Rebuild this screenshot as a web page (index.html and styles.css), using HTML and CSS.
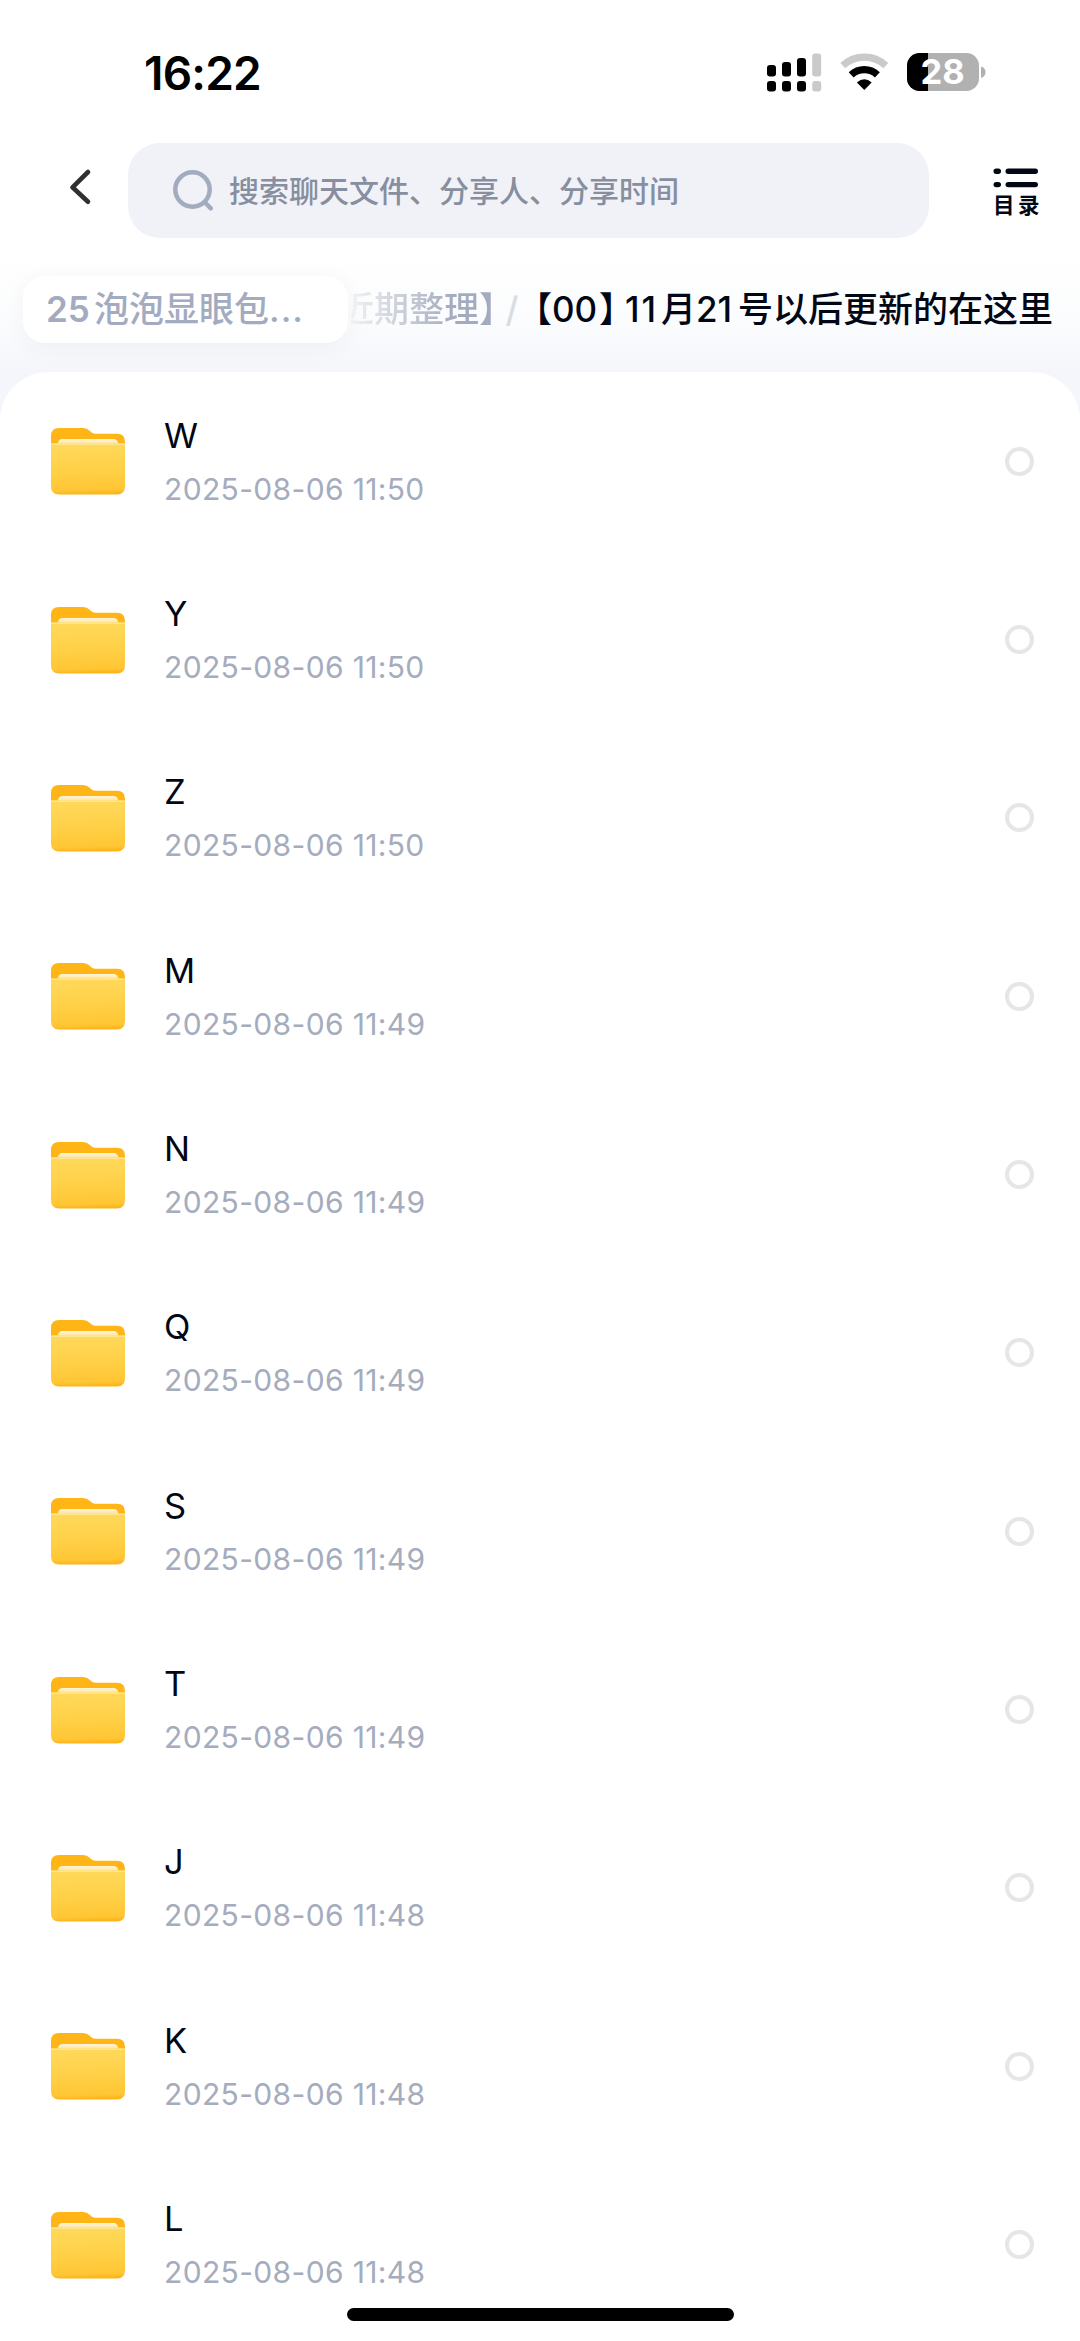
FILE: index.html
```html
<!DOCTYPE html>
<html lang="zh-CN">
<head>
<meta charset="utf-8">
<title>文件目录</title>
<link rel="stylesheet" href="styles.css">
</head>
<body>
<svg class="defs" width="0" height="0" aria-hidden="true">
  <defs>
    <linearGradient id="front" x1="0" y1="0" x2="0.04" y2="1">
      <stop offset="0" stop-color="#ffd95c"/><stop offset="0.5" stop-color="#ffd149"/><stop offset="0.93" stop-color="#ffc634"/><stop offset="1" stop-color="#fdb51c"/>
    </linearGradient>
    <linearGradient id="paper" x1="0" y1="0" x2="0" y2="1">
      <stop offset="0" stop-color="#fff6dd"/><stop offset="1" stop-color="#ffdf8c"/>
    </linearGradient>
    <symbol id="folder" viewBox="0 0 74 67">
      <path d="M0 18V8Q0 0 8 0H32Q36 0 39 3L41 4.700Q42.500 5.800 45 5.800H66Q74 5.800 74 14V18Z" fill="#ffb515"/>
      <path d="M6.500 17Q7 11 11 11H63Q67 11 67.500 17Z" fill="url(#paper)"/>
      <path d="M0 15.500H74V58Q74 66.500 66 66.500H8Q0 66.500 0 58Z" fill="url(#front)"/>
      <path d="M0 16.200H74" stroke="#ffe58d" stroke-width="1.400"/>
    </symbol>
  </defs>
</svg>
<header class="top">
  <div class="status">
    <div class="clock">16:22</div>
    <svg class="signals" width="220" height="40" viewBox="0 0 220 40">
      <g fill="#000"><rect x="1" y="12" width="9" height="11.500" rx="3"/><rect x="16" y="9" width="9" height="14.500" rx="3"/><rect x="31" y="5" width="9" height="18.500" rx="3"/><rect x="1" y="28" width="9" height="10.500" rx="3"/><rect x="16" y="28" width="9" height="10.500" rx="3"/><rect x="31" y="28" width="9" height="10.500" rx="3"/></g>
      <g fill="#cacaca"><rect x="46.200" y="0.500" width="9" height="23" rx="3"/><rect x="46.200" y="28" width="9" height="10.500" rx="3"/></g>
      <path d="M76.800 12.600A31.500 31.500 0 0 1 119.800 12.600" fill="none" stroke="#cacaca" stroke-width="7.200"/>
      <path d="M85.200 21.800A19.200 19.200 0 0 1 111.400 21.800" fill="none" stroke="#000" stroke-width="7.200"/>
      <path d="M98.300 37L90.900 29.600Q98.300 23 105.700 29.600Z" fill="#000"/>
      <clipPath id="cell"><rect x="141" y="0" width="72" height="38" rx="12.500"/></clipPath>
      <g clip-path="url(#cell)"><rect x="141" y="0" width="72" height="38" fill="#b1b1b1"/><rect x="141" y="0" width="21" height="38" fill="#000"/></g>
      <path d="M215 13.500Q219.500 14.500 219.500 19T215 25Z" fill="#b1b1b1"/>
      <text class="charge" x="176.500" y="31.300" text-anchor="middle">28</text>
    </svg>
  </div>
  <div class="searchbar">
    <svg class="back" width="24" height="40" viewBox="0 0 24 40"><path d="M19 5L3.500 20.300L19 34.800" fill="none" stroke="#303033" stroke-width="4.600" stroke-linecap="round" stroke-linejoin="round"/></svg>
    <div class="search">
      <svg width="44" height="44" viewBox="0 0 44 44" fill="none" stroke="#a3acbf" stroke-width="4.500" stroke-linecap="round"><circle cx="20.500" cy="20.500" r="17.200"/><path d="M33 33.500L38.800 39.300"/></svg>
      <span>搜索聊天文件、分享人、分享时间</span>
    </div>
    <div class="menu">
      <svg width="46" height="20" viewBox="0 0 46 20" stroke="#020716" stroke-width="5.400" stroke-linecap="round"><path d="M3.200 3.200H5.300M15.200 3.200H42.300M3.200 16.600H5.300M15.200 16.600H42.300"/></svg>
      <span>目录</span>
    </div>
  </div>
</header>
<nav class="crumbs">
  <div class="chip"><span class="num">25</span><span>泡泡显眼包</span><span class="dots">...</span></div>
  <div class="trail">
    <span class="past">近期整理】</span><span class="slash">/</span>
    <span class="open">【</span><span class="n00">00</span><span class="close">】</span><span class="n11">11</span><span>月</span><span class="n21">21</span><span>号以后更新的在这里</span>
  </div>
</nav>
<main class="list">
  <div class="row"><svg class="folder"><use href="#folder"/></svg><div class="info"><div class="name">W</div><div class="date">2025-08-06 11:50</div></div><i class="pick"></i></div>
  <div class="row"><svg class="folder"><use href="#folder"/></svg><div class="info"><div class="name">Y</div><div class="date">2025-08-06 11:50</div></div><i class="pick"></i></div>
  <div class="row"><svg class="folder"><use href="#folder"/></svg><div class="info"><div class="name">Z</div><div class="date">2025-08-06 11:50</div></div><i class="pick"></i></div>
  <div class="row"><svg class="folder"><use href="#folder"/></svg><div class="info"><div class="name">M</div><div class="date">2025-08-06 11:49</div></div><i class="pick"></i></div>
  <div class="row"><svg class="folder"><use href="#folder"/></svg><div class="info"><div class="name">N</div><div class="date">2025-08-06 11:49</div></div><i class="pick"></i></div>
  <div class="row"><svg class="folder"><use href="#folder"/></svg><div class="info"><div class="name">Q</div><div class="date">2025-08-06 11:49</div></div><i class="pick"></i></div>
  <div class="row"><svg class="folder"><use href="#folder"/></svg><div class="info"><div class="name">S</div><div class="date">2025-08-06 11:49</div></div><i class="pick"></i></div>
  <div class="row"><svg class="folder"><use href="#folder"/></svg><div class="info"><div class="name">T</div><div class="date">2025-08-06 11:49</div></div><i class="pick"></i></div>
  <div class="row"><svg class="folder"><use href="#folder"/></svg><div class="info"><div class="name">J</div><div class="date">2025-08-06 11:48</div></div><i class="pick"></i></div>
  <div class="row"><svg class="folder"><use href="#folder"/></svg><div class="info"><div class="name">K</div><div class="date">2025-08-06 11:48</div></div><i class="pick"></i></div>
  <div class="row"><svg class="folder"><use href="#folder"/></svg><div class="info"><div class="name">L</div><div class="date">2025-08-06 11:48</div></div><i class="pick"></i></div>
</main>
<div class="home"></div>
</body>
</html>
```
FILE: styles.css
```css
* { box-sizing: border-box; }
body {
  margin: 0;
  height: 2341px;
  overflow: hidden;
  background: #fff;
  font-family: Inter, "Noto Sans CJK SC", sans-serif;
  color: #020716;
}
svg { display: block; flex: none; }
.defs { position: absolute; }
.top { height: 250px; padding-top: 45px; }
.status {
  display: flex;
  align-items: center;
  justify-content: space-between;
  height: 57px;
  padding: 0 94px 0 144px;
}
.clock { font-size: 46px; font-weight: 600; line-height: 57px; color: #000; letter-spacing: -0.8px; }
.signals { margin-top: -1px; overflow: visible; }
.charge { font: 700 34.500px Inter, sans-serif; fill: #fff; }
.searchbar { display: flex; align-items: center; height: 95px; margin-top: 41px; padding-left: 69px; }
.back { margin: -8px 35px 0 0; }
.search {
  display: flex;
  align-items: center;
  width: 801px;
  height: 95px;
  padding-left: 44px;
  border-radius: 32px;
  background: #f0f2f8;
  color: #868e9f;
  font-size: 30px;
  white-space: nowrap;
}
.search span { margin: -4px 0 0 13px; font-weight: 500; }
.menu { margin: 6px 0 0 64px; }
.menu span { display: block; margin-top: 3px; font-size: 21.500px; font-weight: 700; line-height: 28px; letter-spacing: 3.500px; }
.crumbs {
  display: flex;
  height: 170px;
  padding: 26px 0 0 23px;
  background: linear-gradient(#fff, #fbfcfd 70px, #f5f6fb 120px);
  font-size: 35px;
  font-weight: 500;
  line-height: 67px;
  white-space: nowrap;
}
.chip {
  display: flex;
  flex: none;
  width: 325px;
  height: 67px;
  padding-left: 23px;
  border-radius: 22px;
  background: #fff;
  box-shadow: 0 4px 22px rgba(40, 50, 90, 0.05);
  color: #a2abbf;
}
.chip .num { width: 48px; font-weight: 600; }
.dots { letter-spacing: 1px; }
.trail {
  display: flex;
  flex: 1;
  justify-content: flex-end;
  min-width: 0;
  height: 84px;
  margin-left: 3px;
  padding-right: 27px;
  overflow: hidden;
}
.trail span { flex: none; }
.past {
  width: 157.500px;
  margin-right: 9px;
  background: linear-gradient(90deg, #f2f3f5 10px, #dcdee4 40px, #a2abbf 115px);
  background-clip: text;
  -webkit-background-clip: text;
  color: transparent;
}
.past, .open, .close { font-feature-settings: "halt"; }
.trail .slash { width: 14px; margin-right: 15px; color: #d9dce2; }
.open { width: 17.500px; }
.n00 { width: 47px; }
.close { width: 26px; }
.n11 { width: 36px; letter-spacing: 2px; }
.n21 { width: 42px; }
.list {
  position: relative;
  margin-top: -48px;
  border-radius: 48px 48px 0 0;
  background: #fff;
}
.row { display: flex; align-items: center; height: 178.350px; padding: 0 46px 0 51px; }
.folder { width: 74px; height: 67px; margin-top: 1px; }
.info { flex: 1; margin-left: 39px; }
.name { font-size: 34.500px; line-height: 46px; }
.date { margin-top: 9px; font-size: 30px; line-height: 42px; color: #a4acbe; letter-spacing: 0.350px; }
.pick { width: 29px; height: 29px; border: 4px solid #e4e6e7; border-radius: 50%; }
.home { position: fixed; left: 347px; top: 2308px; width: 387px; height: 13px; border-radius: 7px; background: #000; }
```
